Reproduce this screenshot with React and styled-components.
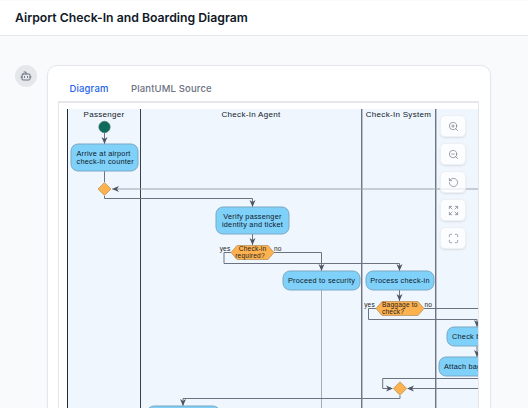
import React from 'react'
import styled, { createGlobalStyle } from 'styled-components'
import { Bot, ZoomIn, ZoomOut, RotateCcw, Expand, Maximize } from 'lucide-react'

const GlobalStyle = createGlobalStyle`
  html, body { margin: 0; padding: 0; height: 100%; background: #f9fafb; }
  body { font-family: Inter, "Liberation Sans", sans-serif; overflow: hidden; }
`

const Page = styled.div`
  height: 408px;
  overflow: hidden;
  display: flex;
  flex-direction: column;
  padding-top: 1px;
  box-sizing: border-box;
`
const Header = styled.header`
  flex: none;
  height: 34px;
  box-sizing: content-box;
  display: flex;
  align-items: center;
  padding: 0 15px 0;
  background: #fff;
  border-bottom: 1px solid #e5e7eb;
`
const Title = styled.h1`
  margin: 0 0 2px;
  font-size: 12.25px;
  font-weight: 600;
  color: #111827;
`
const Main = styled.main`
  flex: 1;
  min-height: 0;
  display: flex;
  align-items: flex-start;
  gap: 10px;
  padding: 29px 37px 0 15px;
`
const Avatar = styled.div`
  flex: none;
  width: 22px;
  height: 22px;
  border-radius: 50%;
  background: #e5e7eb;
  color: #4b5563;
  display: flex;
  align-items: center;
  justify-content: center;
`
const Card = styled.section`
  flex: 1;
  min-width: 0;
  height: 420px;
  box-sizing: border-box;
  padding: 0 11px 0 10px;
  background: #fff;
  border: 1px solid #e5e7eb;
  border-radius: 10px;
  box-shadow: 0 1px 3px rgba(0, 0, 0, 0.04);
`
const Tabs = styled.nav`
  display: flex;
  height: 36px;
  box-sizing: border-box;
  padding-top: 11px;
`
const Tab = styled.button`
  width: ${p => (p.$active ? '62px' : 'auto')};
  height: 25px;
  margin-left: ${p => (p.$active ? '0' : '11px')};
  padding: 0 0 2px;
  background: none;
  border: 0;
  border-bottom: 1px solid ${p => (p.$active ? '#2563eb' : 'transparent')};
  font: 500 9.5px Inter, "Liberation Sans", sans-serif;
  letter-spacing: 0.15px;
  color: ${p => (p.$active ? '#2563eb' : '#6b7280')};
`
const Panel = styled.div`
  position: relative;
  height: 306px;
  border: 1px solid #e5e7eb;
  border-top-width: 2px;
  margin-top: -1px;
  overflow: hidden;
  background: #fff;
`
const Canvas = styled.svg`
  display: block;
  width: 100%;
  height: 100%;
`
const Toolbar = styled.div`
  position: absolute;
  top: 12px;
  right: 12px;
  display: flex;
  flex-direction: column;
  gap: 6px;
`
const ToolButton = styled.button`
  width: 26px;
  height: 22px;
  padding: 0;
  display: flex;
  align-items: center;
  justify-content: center;
  background: rgba(255, 255, 255, 0.72);
  border: 1px solid #eef0f3;
  border-radius: 5px;
  box-shadow: 0 1px 2px rgba(0, 0, 0, 0.1);
  color: #6b7280;
`
const LaneLabel = styled.text`
  font: 8px "Liberation Sans", sans-serif;
  letter-spacing: 0.3px;
  fill: #111827;
  text-anchor: middle;
`
const BoxLabel = styled.text`
  font: 7.3px "Liberation Sans", sans-serif;
  letter-spacing: 0.25px;
  fill: #0f172a;
  text-anchor: ${p => p.$anchor || 'middle'};
`
const SmallLabel = styled.text`
  font: 6.6px "Liberation Sans", sans-serif;
  letter-spacing: 0.2px;
  fill: #1f1f23;
  text-anchor: ${p => p.$anchor || 'middle'};
`

const Lines = ({ d, color = '#6b7280' }) => (
  <path d={d} fill="none" stroke={color} strokeWidth="1" />
)

// plantuml style open arrow head, tip at x,y
const Head = ({ x, y, dir = 'down' }) => {
  const rot = { down: 0, left: 90, right: -90 }[dir]
  return (
    <path
      d="M-3,-7 L0,0 L3,-7 L0,-5 Z"
      transform={`translate(${x} ${y}) rotate(${rot})`}
      fill="#4b5563"
    />
  )
}

const Action = ({ x, y, w, h, lines, align, tx }) => (
  <>
    <rect x={x} y={y} width={w} height={h} rx="7" fill="#7fd1f9" stroke="#7aa9c4" strokeWidth="1" />
    {lines.map((line, i) => (
      <BoxLabel
        key={line}
        x={tx ?? x + w / 2}
        y={y + h / 2 + 2.5 + (i - (lines.length - 1) / 2) * 8}
        $anchor={align}
      >
        {line}
      </BoxLabel>
    ))}
  </>
)

const Diamond = ({ x, y, r }) => (
  <polygon
    points={`${x - r},${y} ${x},${y - r} ${x + r},${y} ${x},${y + r}`}
    fill="#fdb24f"
    stroke="#b08c58"
    strokeWidth="0.7"
  />
)

const Hexagon = ({ x1, x2, y1, y2 }) => {
  const m = (y1 + y2) / 2
  return (
    <polygon
      points={`${x1},${m} ${x1 + 6},${y1} ${x2 - 6},${y1} ${x2},${m} ${x2 - 6},${y2} ${x1 + 6},${y2}`}
      fill="#fdb24f"
      stroke="#b08c58"
      strokeWidth="0.7"
    />
  )
}

const Diagram = () => (
  <Canvas viewBox="59 103 419 306" preserveAspectRatio="xMinYMin slice">
    <rect x="67" y="109" width="411" height="300" fill="#eff6fe" />

    <path d="M67.5,109V409" stroke="#1f2937" strokeWidth="1" />
    <path d="M140.5,109V409" stroke="#374151" strokeWidth="1" />
    <path d="M361.8,109V409" stroke="#374151" strokeWidth="1" />
    <path d="M435.8,109V409" stroke="#374151" strokeWidth="1" />

    <LaneLabel x="104" y="117">Passenger</LaneLabel>
    <LaneLabel x="251" y="117">Check-In Agent</LaneLabel>
    <LaneLabel x="398.5" y="117">Check-In System</LaneLabel>

    <Lines d="M112,189H478" color="#9ca3af" />
    <Lines d="M321.5,290V409" color="#a5acb6" />
    <Lines d="M104.5,133V144M104.5,171V182" />
    <Lines d="M104.5,196V198.5H252.5V207" />
    <Lines d="M252.5,234V245" />
    <Lines d="M231,252.5H224V263.5H399.5V271" />
    <Lines d="M274,252.5H321.5V271" />
    <Lines d="M399.5,290V301" />
    <Lines d="M376,308.5H368.5V319.5H477V327" />
    <Lines d="M424,308.5H478" />
    <Lines d="M477,346V357" />
    <Lines d="M478,378.5H382.7V388.5H392" />
    <Lines d="M478,388.5H408" />
    <Lines d="M400,395.5V398.5H183V406" />

    <Head x={104.5} y={144} />
    <Head x={112} y={189} dir="left" />
    <Head x={252.5} y={207} />
    <Head x={252.5} y={245} />
    <Head x={321.5} y={271} />
    <Head x={399.5} y={271} />
    <Head x={399.5} y={301} />
    <Head x={477} y={327} />
    <Head x={477} y={357} />
    <Head x={393} y={388.5} dir="right" />
    <Head x={407} y={388.5} dir="left" />
    <Head x={183} y={406} />

    <circle cx="104.5" cy="127" r="5.7" fill="#0f6b5c" stroke="#3f6f68" strokeWidth="0.6" />

    <Action x={71} y={144} w={67} h={27} lines={['Arrive at airport', 'check-in counter']} align="start" tx={76.5} />
    <Diamond x={104.5} y={189} r={6.5} />

    <Action x={216} y={207} w={73} h={27} lines={['Verify passenger', 'identity and ticket']} />
    <Hexagon x1={231} x2={274} y1={245.5} y2={259.5} />
    <SmallLabel x="252.5" y="251">Check-in</SmallLabel>
    <SmallLabel x="250" y="258">required?</SmallLabel>
    <SmallLabel x="230.5" y="251" $anchor="end">yes</SmallLabel>
    <SmallLabel x="274" y="251" $anchor="start">no</SmallLabel>

    <Action x={283} y={271} w={77} h={19} lines={['Proceed to security']} />
    <Action x={366} y={271} w={68} h={19} lines={['Process check-in']} />
    <Hexagon x1={376} x2={424} y1={301.5} y2={315.5} />
    <SmallLabel x="382" y="307" $anchor="start">Baggage to</SmallLabel>
    <SmallLabel x="382" y="314" $anchor="start">check?</SmallLabel>
    <SmallLabel x="375" y="307" $anchor="end">yes</SmallLabel>
    <SmallLabel x="424.5" y="307" $anchor="start">no</SmallLabel>

    <Action x={447} y={327} w={90} h={19} lines={['Check baggage']} align="start" tx={452} />
    <Action x={439} y={357} w={90} h={19} lines={['Attach baggage tag']} align="start" tx={444} />
    <Diamond x={400} y={388.5} r={6.7} />

    <Action x={147} y={406} w={73} h={27} lines={['Board plane']} />
  </Canvas>
)

const tools = [ZoomIn, ZoomOut, RotateCcw, Expand, Maximize]

export default function App() {
  return (
    <>
      <GlobalStyle />
      <Page>
        <Header>
          <Title>Airport Check-In and Boarding Diagram</Title>
        </Header>
        <Main>
          <Avatar>
            <Bot size={12} strokeWidth={1.6} />
          </Avatar>
          <Card>
            <Tabs>
              <Tab $active>Diagram</Tab>
              <Tab>PlantUML Source</Tab>
            </Tabs>
            <Panel>
              <Diagram />
              <Toolbar>
                {tools.map((Icon, i) => (
                  <ToolButton key={i}>
                    <Icon size={11} strokeWidth={1.4} />
                  </ToolButton>
                ))}
              </Toolbar>
            </Panel>
          </Card>
        </Main>
      </Page>
    </>
  )
}
